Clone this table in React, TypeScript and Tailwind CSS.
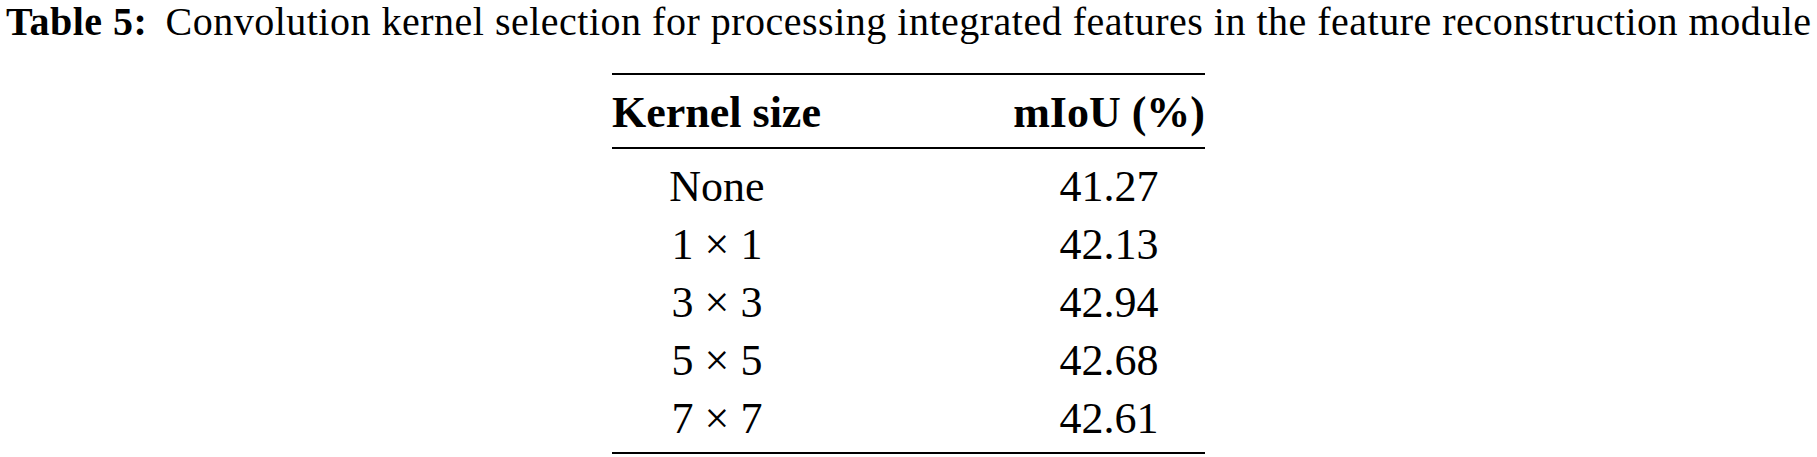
import React from 'react';

const rows = [
  { kernel: 'None', miou: '41.27' },
  { kernel: '1 × 1', miou: '42.13' },
  { kernel: '3 × 3', miou: '42.94' },
  { kernel: '5 × 5', miou: '42.68' },
  { kernel: '7 × 7', miou: '42.61' },
];

const App: React.FC = () => {
  return (
    <div className="w-[1817px] h-[457px] bg-white text-black font-['Liberation_Serif','Times_New_Roman',serif]">
      {/* Caption */}
      <div className="pl-[6px] text-[40px] leading-[44px] tracking-[0.5px] whitespace-nowrap">
        <span className="font-bold">Table 5:</span>
        <span className="ml-[18px]">
          Convolution kernel selection for processing integrated features in the feature reconstruction module
        </span>
      </div>

      {/* Booktabs table */}
      <div className="mx-auto mt-[29px] w-[593px]">
        <div className="h-[2px] bg-black" />
        <div className="flex justify-between pt-[14px] pb-[10px] text-[44px] leading-[48px] font-bold">
          <div className="w-[210px] text-left">Kernel size</div>
          <div className="w-[192px] text-right">mIoU (%)</div>
        </div>
        <div className="h-[2px] bg-black" />
        <div className="pt-[9px] pb-[4px] text-[44px] leading-[58px]">
          {rows.map((row) => (
            <div key={row.kernel} className="flex justify-between">
              <div className="w-[210px] text-center">{row.kernel}</div>
              <div className="w-[192px] text-center">{row.miou}</div>
            </div>
          ))}
        </div>
        <div className="h-[2px] bg-black" />
      </div>
    </div>
  );
};

export default App;
